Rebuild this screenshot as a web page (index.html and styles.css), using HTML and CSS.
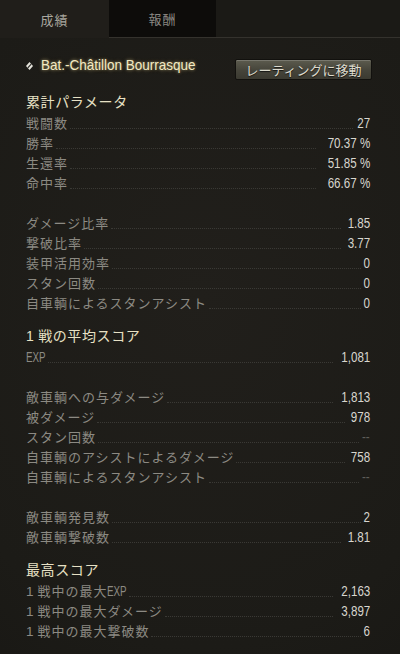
FILE: index.html
```html
<!DOCTYPE html>
<html lang="ja">
<head>
<meta charset="utf-8">
<title>成績</title>
<link rel="stylesheet" href="styles.css">
</head>
<body>
<div class="tabs">
  <div class="tab tab-active">成績</div>
  <div class="tab">報酬</div>
  <div class="tab-rest"></div>
</div>
<div class="content">
  <div class="vehicle">
    <div class="veh-name">
      <svg class="veh-icon" width="7" height="8" viewBox="0 0 7 8"><polygon points="3.5,0 7,4 3.5,8 0,4" fill="#e6e4dc"/><line x1="5.2" y1="2.2" x2="1.8" y2="5.8" stroke="#2a2925" stroke-width="1.2"/></svg>
      <span class="veh-title">Bat.-Châtillon Bourrasque</span>
    </div>
    <button class="btn">レーティングに移動</button>
  </div>

  <section class="group">
    <h2 class="group-title">累計パラメータ</h2>
    <div class="row"><span class="label">戦闘数</span><span class="leader"></span><span class="value">27</span></div>
    <div class="row"><span class="label">勝率</span><span class="leader"></span><span class="value">70.37 %</span></div>
    <div class="row"><span class="label">生還率</span><span class="leader"></span><span class="value">51.85 %</span></div>
    <div class="row"><span class="label">命中率</span><span class="leader"></span><span class="value">66.67 %</span></div>
    <div class="spacer"></div>
    <div class="row"><span class="label">ダメージ比率</span><span class="leader"></span><span class="value">1.85</span></div>
    <div class="row"><span class="label">撃破比率</span><span class="leader"></span><span class="value">3.77</span></div>
    <div class="row"><span class="label">装甲活用効率</span><span class="leader"></span><span class="value">0</span></div>
    <div class="row"><span class="label">スタン回数</span><span class="leader"></span><span class="value">0</span></div>
    <div class="row"><span class="label">自車輌によるスタンアシスト</span><span class="leader"></span><span class="value">0</span></div>
  </section>

  <section class="group">
    <h2 class="group-title"><span class="num">1</span> 戦の平均スコア</h2>
    <div class="row"><span class="label"><span class="latin">EXP</span></span><span class="leader"></span><span class="value">1,081</span></div>
    <div class="spacer"></div>
    <div class="row"><span class="label">敵車輌への与ダメージ</span><span class="leader"></span><span class="value">1,813</span></div>
    <div class="row"><span class="label">被ダメージ</span><span class="leader"></span><span class="value">978</span></div>
    <div class="row"><span class="label">スタン回数</span><span class="leader"></span><span class="value value-dim">--</span></div>
    <div class="row"><span class="label">自車輌のアシストによるダメージ</span><span class="leader"></span><span class="value">758</span></div>
    <div class="row"><span class="label">自車輌によるスタンアシスト</span><span class="leader"></span><span class="value value-dim">--</span></div>
    <div class="spacer"></div>
    <div class="row"><span class="label">敵車輌発見数</span><span class="leader"></span><span class="value">2</span></div>
    <div class="row"><span class="label">敵車輌撃破数</span><span class="leader"></span><span class="value">1.81</span></div>
  </section>

  <section class="group">
    <h2 class="group-title">最高スコア</h2>
    <div class="row"><span class="label"><span class="digit">1</span> 戦中の最大<span class="latin">EXP</span></span><span class="leader"></span><span class="value">2,163</span></div>
    <div class="row"><span class="label"><span class="digit">1</span> 戦中の最大ダメージ</span><span class="leader"></span><span class="value">3,897</span></div>
    <div class="row"><span class="label"><span class="digit">1</span> 戦中の最大撃破数</span><span class="leader"></span><span class="value">6</span></div>
  </section>
</div>
</body>
</html>
```

FILE: styles.css
```css
html, body {
  margin: 0;
  padding: 0;
}
body {
  width: 400px;
  height: 654px;
  overflow: hidden;
  background: radial-gradient(ellipse 120% 90% at 50% 45%, #211f1b 0%, #1c1b17 60%, #161512 100%);
  font-family: "Noto Sans CJK JP", "Liberation Sans", sans-serif;
  color: #8e8c85;
}

.tabs {
  display: flex;
  height: 37px;
  border-bottom: 1px solid #34322d;
}
.tab {
  width: 107px;
  height: 37px;
  display: flex;
  align-items: center;
  justify-content: center;
  font-size: 13px;
  letter-spacing: 1px;
  background: #0d0c0a;
  color: #8a8882;
}
.tab-active {
  width: 109px;
  height: 38px;
  background: #201e1a;
  color: #a9a79f;
  margin-bottom: -1px;
}
.tab-rest {
  flex: 1;
  background: #1b1a16;
}

.content {
  padding: 21px 30px 0 26px;
}

.vehicle {
  display: flex;
  align-items: flex-start;
  justify-content: space-between;
  height: 21px;
}
.veh-name {
  display: flex;
  align-items: center;
  gap: 8px;
  margin-top: -4px;
}
.veh-icon {
  display: block;
  margin-top: 1px;
}
.veh-title {
  display: inline-block;
  font-family: "Liberation Sans", sans-serif;
  font-size: 15px;
  line-height: 20px;
  color: #f3eac2;
  transform: scaleX(0.9);
  transform-origin: left center;
  text-shadow: 0 0 3px rgba(235, 215, 145, 0.55), 0 0 6px rgba(235, 215, 145, 0.25);
}
.btn {
  width: 137px;
  height: 21px;
  margin: 0 -2px 0 0;
  padding: 0;
  border: 1px solid #12110e;
  border-radius: 2px;
  background: linear-gradient(#5c5b4e, #45443a 55%, #3b3a31);
  box-shadow: inset 0 1px 0 rgba(255, 255, 255, 0.18);
  font-family: "Noto Sans CJK JP", sans-serif;
  font-size: 13px;
  line-height: 19px;
  color: #dcdacd;
  text-shadow: 0 1px 1px rgba(0, 0, 0, 0.7);
}

.group {
  margin-top: 11px;
}
.group + .group {
  margin-top: 12px;
}
.group-title {
  margin: 0 0 2px 0;
  height: 20px;
  font-size: 14px;
  line-height: 20px;
  font-weight: normal;
  letter-spacing: 0.6px;
  color: #e7e1c5;
}
.num {
  font-family: "Liberation Sans", sans-serif;
}

.row {
  display: flex;
  height: 20px;
  line-height: 20px;
}
.label {
  font-size: 13px;
  letter-spacing: 1px;
  color: #8c8a83;
  white-space: nowrap;
}
.latin {
  display: inline-block;
  font-family: "Liberation Sans", sans-serif;
  font-size: 14px;
  letter-spacing: 0;
  transform: scaleX(0.7);
  transform-origin: left center;
  margin-right: -8px;
}
.digit {
  font-family: "Liberation Sans", sans-serif;
  font-size: 13.5px;
  letter-spacing: 0;
}
.leader {
  flex: 1;
  height: 15px;
  margin: 0 1px 0 2px;
  border-bottom: 1px dotted #3a3935;
}
.value {
  display: inline-block;
  font-family: "Liberation Sans", sans-serif;
  font-size: 14.5px;
  color: #d8d6cf;
  white-space: nowrap;
  transform: scaleX(0.8);
  transform-origin: right center;
}
.value-dim {
  color: #5e5d58;
}
.spacer {
  height: 20px;
}
```
